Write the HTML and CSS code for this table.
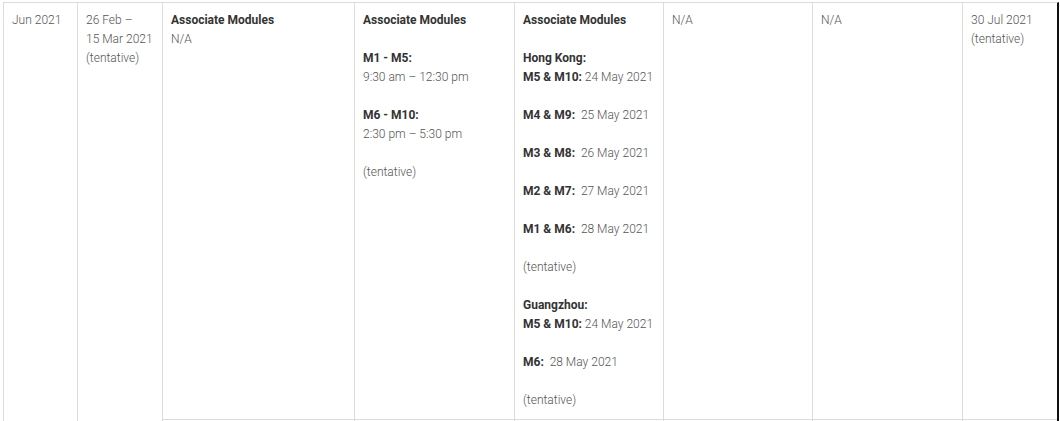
FILE: index.html
```html
<!DOCTYPE html>
<html lang="en">
<head>
<meta charset="utf-8">
<title>Exam schedule</title>
<link rel="stylesheet" href="styles.css">
</head>
<body>
<div class="frame">
  <div class="schedule">
    <div class="cell c1 span">Jun 2021</div>
    <div class="cell c2 span">26 Feb –<br>15 Mar 2021<br>(tentative)</div>
    <div class="cell c3">
      <b>Associate Modules</b><br>N/A
    </div>
    <div class="cell c4">
      <p><b>Associate Modules</b></p>
      <p><b>M1 - M5:</b><br>9:30 am – 12:30 pm</p>
      <p><b>M6 - M10:</b><br>2:30 pm – 5:30 pm</p>
      <p>(tentative)</p>
    </div>
    <div class="cell c5">
      <p><b>Associate Modules</b></p>
      <p><b>Hong Kong:</b><br><b>M5 &amp; M10:</b> 24 May 2021</p>
      <p><b>M4 &amp; M9:</b>&nbsp; 25 May 2021</p>
      <p><b>M3 &amp; M8:</b>&nbsp; 26 May 2021</p>
      <p><b>M2 &amp; M7:</b>&nbsp; 27 May 2021</p>
      <p><b>M1 &amp; M6:</b>&nbsp; 28 May 2021</p>
      <p>(tentative)</p>
      <p><b>Guangzhou:</b><br><b>M5 &amp; M10:</b> 24 May 2021</p>
      <p><b>M6:</b>&nbsp; 28 May 2021</p>
      <p>(tentative)</p>
    </div>
    <div class="cell c6">N/A</div>
    <div class="cell c7">N/A</div>
    <div class="cell c8">30 Jul 2021<br>(tentative)</div>
    <div class="cell next"></div>
    <div class="cell next"></div>
    <div class="cell next"></div>
    <div class="cell next"></div>
    <div class="cell next"></div>
    <div class="cell next c8"></div>
  </div>
</div>
</body>
</html>
```

FILE: styles.css
```css
html, body {
  margin: 0;
  padding: 0;
  background: #fff;
  overflow: hidden;
}

body {
  width: 1060px;
  height: 421px;
}

.frame {
  padding: 2px 0 0 3px;
}

.schedule {
  display: grid;
  grid-template-columns: 74px 85px 192px 160px 149px 149px 150px 94px;
  grid-template-rows: auto 1px;
  width: 1053px;
  border-top: 1px solid #dcdcdc;
  border-left: 1px solid #dcdcdc;
  border-right: 2px solid #111;
  font-family: Roboto, "Liberation Sans", sans-serif;
  font-size: 12px;
  font-weight: 300;
  line-height: 19px;
  color: #555;
}

.cell {
  padding: 8px 8px 9px 8px;
  border-right: 1px solid #dcdcdc;
  border-bottom: 1px solid #dcdcdc;
}

.next {
  padding: 0;
  border-bottom: none;
}

.span {
  grid-row: span 2;
  border-bottom: none;
}

.c8 {
  border-right: none;
}

.cell p {
  margin: 0 0 19px 0;
}

.cell p:last-child {
  margin-bottom: 0;
}

.cell b {
  font-weight: 700;
  color: #333;
}
```
